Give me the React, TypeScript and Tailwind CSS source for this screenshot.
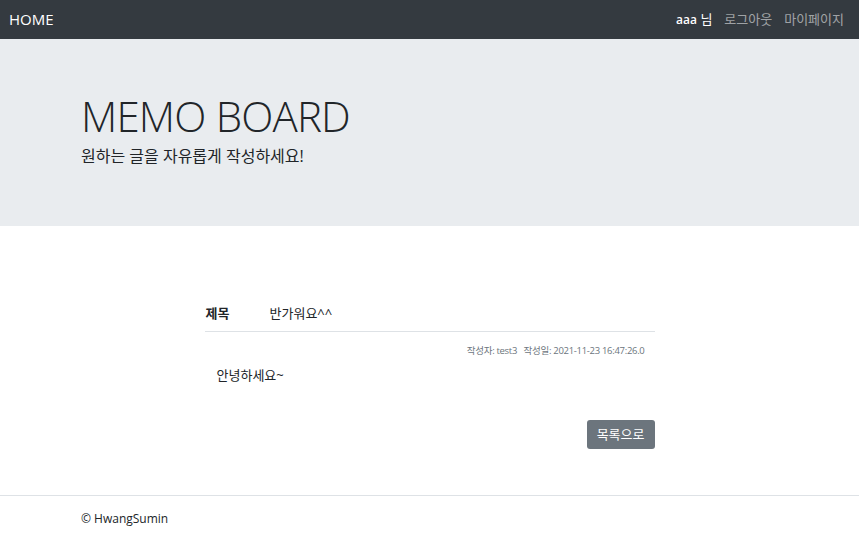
import React from "react";

const font = { fontFamily: '"Open Sans", "Noto Sans CJK KR", sans-serif' };

export default function App() {
  return (
    <div className="min-h-[537px] bg-white text-[#212529]" style={font}>
      <nav className="h-[39px] bg-[#343a40] flex items-center justify-between px-[9px]">
        <a className="text-[15px] text-white">HOME</a>
        <div className="flex items-center gap-[12px] text-[13px] pr-[6px]">
          <span className="text-white">
            <b className="font-semibold text-[12px]">aaa</b> 님
          </span>
          <a className="text-[#ffffff8c]">로그아웃</a>
          <a className="text-[#ffffff8c]">마이페이지</a>
        </div>
      </nav>

      <section className="h-[187px] bg-[#e9ecef] px-[81px] pt-[50px]">
        <h1 className="text-[42px] font-light leading-[54px] tracking-[-0.8px]">MEMO BOARD</h1>
        <p className="text-[16px] mt-[1px]">원하는 글을 자유롭게 작성하세요!</p>
      </section>

      <main className="w-[450px] mx-auto pt-[72px] pb-[46px]">
        <div className="flex items-center h-[34px] text-[13px] border-b border-[#dee2e6] pb-[2px]">
          <span className="w-[65px] pl-[1px] font-bold">제목</span>
          <span>반가워요^^</span>
        </div>
        <div className="text-right text-[9.5px] tracking-[-0.3px] text-[#6c757d] mt-[12px] pr-[10px]">
          작성자: test3&nbsp;&nbsp;&nbsp;작성일: 2021-11-23 16:47:26.0
        </div>
        <p className="text-[13px] pl-[12px] mt-[8px]">안녕하세요~</p>
        <div className="flex justify-end mt-[34px]">
          <button className="h-[29px] px-[10px] rounded-[3px] bg-[#6c757d] text-white text-[13px]">
            목록으로
          </button>
        </div>
      </main>

      <footer className="border-t border-[#dee2e6] px-[81px] pt-[14px] text-[12px]">
        © HwangSumin
      </footer>
    </div>
  );
}
